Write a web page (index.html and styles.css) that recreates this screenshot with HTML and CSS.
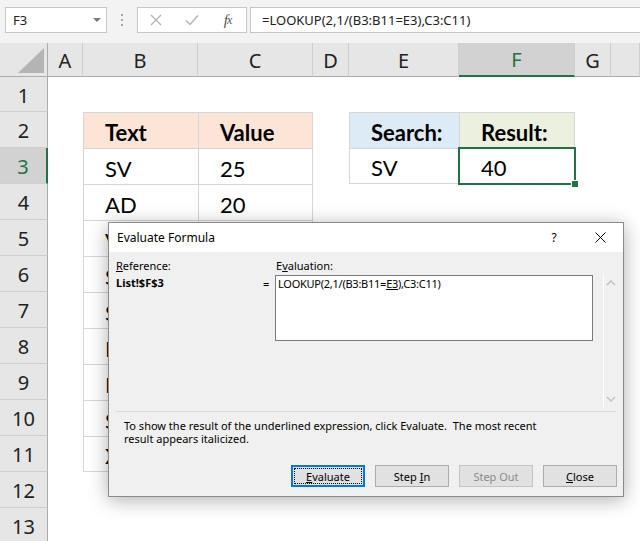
FILE: index.html
```html
<!DOCTYPE html>
<html>
<head>
<meta charset="utf-8">
<link rel="stylesheet" href="styles.css">
</head>
<body>
<div class="fbar">
  <div class="namebox"><span>F3</span><span class="dd"></span></div>
  <div class="grip"><i></i><i></i><i></i></div>
  <div class="fbtns">
    <span class="slot"><svg width="12" height="12" viewBox="0 0 12 12"><path d="M1 1L11 11M11 1L1 11" stroke="#b4b4b4" stroke-width="1.3" fill="none"/></svg></span>
    <span class="slot"><svg width="14" height="12" viewBox="0 0 14 12"><path d="M1 6.5L5 10.5L13 1.5" stroke="#b4b4b4" stroke-width="1.4" fill="none"/></svg></span>
    <span class="slot fx">f<span class="fxx">x</span></span>
  </div>
  <div class="finput">=LOOKUP(2,1/(B3:B11=E3),C3:C11)</div>
</div>

<div class="sheet">
  <div class="corner"><svg width="48" height="34" viewBox="0 0 48 34"><polygon points="44,5 44,30 18,30" fill="#b4b4b4"/></svg></div>
  <div class="ch">A</div><div class="ch">B</div><div class="ch">C</div><div class="ch">D</div><div class="ch">E</div><div class="ch chsel">F</div><div class="ch">G</div><div class="ch"></div>

  <div class="rh">1</div><div></div><div></div><div></div><div></div><div></div><div></div><div></div><div></div>

  <div class="rh">2</div><div></div><div class="c t hp b">Text</div><div class="c t tr hp b">Value</div><div></div><div class="c t hb b">Search:</div><div class="c t tr hg b">Result:</div><div></div><div></div>

  <div class="rh rhsel">3</div><div></div><div class="c t">SV</div><div class="c t tr">25</div><div></div><div class="c t tb">SV</div><div class="c t tr tb sel">40</div><div></div><div></div>

  <div class="rh">4</div><div></div><div class="c t">AD</div><div class="c t tr">20</div><div></div><div></div><div></div><div></div><div></div>

  <div class="rh">5</div><div></div><div class="c t">V</div><div class="c t tr"></div><div></div><div></div><div></div><div></div><div></div>

  <div class="rh">6</div><div></div><div class="c t">S</div><div class="c t tr"></div><div></div><div></div><div></div><div></div><div></div>

  <div class="rh">7</div><div></div><div class="c t">S</div><div class="c t tr"></div><div></div><div></div><div></div><div></div><div></div>

  <div class="rh">8</div><div></div><div class="c t">H</div><div class="c t tr"></div><div></div><div></div><div></div><div></div><div></div>

  <div class="rh">9</div><div></div><div class="c t">F</div><div class="c t tr"></div><div></div><div></div><div></div><div></div><div></div>

  <div class="rh">10</div><div></div><div class="c t">S</div><div class="c t tr"></div><div></div><div></div><div></div><div></div><div></div>

  <div class="rh">11</div><div></div><div class="c t tb">X</div><div class="c t tr tb"></div><div></div><div></div><div></div><div></div><div></div>

  <div class="rh">12</div><div></div><div></div><div></div><div></div><div></div><div></div><div></div><div></div>

  <div class="rh">13</div><div></div><div></div><div></div><div></div><div></div><div></div><div></div><div></div>
</div>

<div class="dialog">
  <div class="titlebar">
    <span class="title">Evaluate Formula</span>
    <span class="tbtn help">?</span>
    <span class="tbtn"><svg width="11" height="11" viewBox="0 0 11 11"><path d="M0.5 0.5L10.5 10.5M10.5 0.5L0.5 10.5" stroke="#000" stroke-width="1" fill="none"/></svg></span>
  </div>
  <div class="dbody">
    <div class="dmain">
      <div class="lbl"><span><u>R</u>eference:</span></div>
      <div></div>
      <div class="lbl elbl"><span>E<u>v</u>aluation:</span></div>
      <div class="scroll">
        <svg width="10" height="6" viewBox="0 0 10 6"><path d="M1 5L5 1L9 5" stroke="#c2c2c2" stroke-width="1.5" fill="none"/></svg>
        <svg width="10" height="6" viewBox="0 0 10 6"><path d="M1 1L5 5L9 1" stroke="#c2c2c2" stroke-width="1.5" fill="none"/></svg>
      </div>
      <div class="ref">List!$F$3</div>
      <div class="eq">=</div>
      <div class="evbox"><span>LOOKUP(2,1/(B3:B11=<u>E3</u>),C3:C11)</span></div>
    </div>
    <div class="sep"></div>
    <p class="info">To show the result of the underlined expression, click Evaluate.&nbsp; The most recent<br>result appears italicized.</p>
    <div class="btns">
      <div class="btn focus"><span class="focusring"><span><u>E</u>valuate</span></span></div>
      <div class="btn"><span>Step <u>I</u>n</span></div>
      <div class="btn disabled"><span>Step Out</span></div>
      <div class="btn"><span><u>C</u>lose</span></div>
    </div>
  </div>
</div>
</body>
</html>
```

FILE: styles.css
```css
* { box-sizing: border-box; margin: 0; padding: 0; }
html, body { width: 640px; height: 541px; overflow: hidden; background: #fff; }
body { font-family: "Noto Sans", "Open Sans", sans-serif; position: relative; color: #000; }

/* formula bar */
.fbar { height: 43px; background: #f3f3f3; display: flex; align-items: flex-start; padding: 7px 0 0 5px; }
.namebox { width: 102px; height: 26px; background: #fff; border: 1px solid #c6c6c6; display: flex; align-items: center; padding-left: 7px; font-size: 13px; color: #222; }
.namebox .dd { margin-left: auto; margin-right: 5px; width: 0; height: 0; border-left: 4px solid transparent; border-right: 4px solid transparent; border-top: 4px solid #7a7a7a; }
.grip { width: 30px; height: 26px; display: flex; flex-direction: column; align-items: center; justify-content: center; gap: 3px; }
.grip i { display: block; width: 2px; height: 2px; background: #a6a6a6; }
.fbtns { width: 110px; height: 26px; background: #fff; border: 1px solid #c6c6c6; display: flex; align-items: center; }
.slot { width: 36px; display: flex; justify-content: center; align-items: center; }
.fx { font-family: "Liberation Serif", serif; font-style: italic; font-size: 15px; color: #555; padding-top: 1px; }
.fxx { font-size: 12px; margin-left: -1px; }
.finput { flex: 1; margin-left: 3px; height: 26px; background: #fff; border: 1px solid #c6c6c6; border-right: none; padding-left: 11px; display: flex; align-items: center; font-size: 13px; color: #222; }

/* sheet */
.sheet { display: grid; grid-template-columns: 48px 35px 115px 115px 36px 110px 116px 36px 29px; grid-template-rows: 34px 35px repeat(12, 36px); }
.corner { background: #e6e6e6; border-right: 1px solid #ababab; border-bottom: 1px solid #ababab; }
.corner svg { display: block; }
.ch { background: #e6e6e6; border-right: 1px solid #cfcfcf; border-bottom: 1px solid #ababab; display: flex; align-items: center; justify-content: center; font-size: 20px; color: #222; padding-top: 1px; }
.chsel { background: #d2d2d2; border-bottom: 2px solid #217346; color: #217346; }
.rh { background: #e6e6e6; border-right: 1px solid #ababab; border-bottom: 1px solid #cfcfcf; display: flex; align-items: center; justify-content: center; font-size: 20px; color: #222; padding-top: 2px; }
.rhsel { background: #d2d2d2; border-right: 2px solid #217346; color: #217346; }

.c { display: flex; align-items: center; padding: 3px 0 0 21px; font-family: Lato, "Liberation Sans", sans-serif; font-size: 22px; color: #000; }
.t { border-left: 1px solid #d6d6d6; border-top: 1px solid #d6d6d6; }
.tr { border-right: 1px solid #d6d6d6; }
.tb { border-bottom: 1px solid #d6d6d6; }
.b { font-weight: 700; }
.hp { background: #fce4d6; }
.hb { background: #ddebf7; }
.hg { background: #ebf1de; }
.sel { position: relative; }
.sel::after { content: ""; position: absolute; left: -2px; top: -2px; right: -2px; bottom: -2px; border: 2px solid #217346; }
.sel::before { content: ""; position: absolute; right: -5px; bottom: -5px; width: 6px; height: 6px; background: #217346; border: 1px solid #fff; z-index: 1; }

/* dialog */
.dialog { position: absolute; left: 108px; top: 222px; width: 516px; height: 275px; background: #f0f0f0; border: 1px solid #8a8a8a; box-shadow: 0 3px 18px rgba(0,0,0,0.32); display: flex; flex-direction: column; font-size: 11px; }
.titlebar { height: 29px; background: #fff; display: flex; align-items: center; padding-left: 8px; }
.title { font-size: 12px; flex: 1; }
.tbtn { width: 46px; height: 29px; display: flex; align-items: center; justify-content: center; }
.help { font-size: 12px; }
.dbody { padding: 7px 6px 0 7px; flex: 1; display: flex; flex-direction: column; }
.dmain { display: grid; grid-template-columns: 147px 12px 318px 1fr; grid-template-rows: 16px 133px; }
.lbl { line-height: 13px; }
.elbl { padding-left: 1px; }
.scroll { grid-row: 2; grid-column: 4; margin-left: 10px; width: 15px; border-left: 1px solid #fff; display: flex; flex-direction: column; justify-content: space-between; align-items: center; padding: 5px 0 6px; }
.scroll svg { display: block; }
.ref { font-weight: 700; line-height: 13px; padding-top: 1px; grid-row: 2; grid-column: 1; }
.eq { grid-row: 2; grid-column: 2; line-height: 13px; padding-top: 2px; text-align: left; }
.evbox { grid-row: 2; grid-column: 3; height: 66px; background: #fff; border: 1px solid #7a7a7a; padding: 1px 2px; line-height: 13px; letter-spacing: -0.25px; }
.sep { height: 1px; background: #dadada; margin-top: 3px; margin-right: 1px; }
.info { margin: 7px 0 0 8px; line-height: 13px; }
.btns { display: flex; justify-content: flex-end; gap: 10px; margin-top: 20px; }
.btn { width: 74px; height: 22px; background: #e1e1e1; border: 1px solid #adadad; display: flex; align-items: center; justify-content: center; font-size: 11px; }
.btn.focus { border: 2px solid #0078d7; padding: 1px; }
.focusring { width: 100%; height: 100%; border: 1px dotted #000; display: flex; align-items: center; justify-content: center; }
.btn.disabled { color: #8a8a8a; border-color: #c4c4c4; }
```
